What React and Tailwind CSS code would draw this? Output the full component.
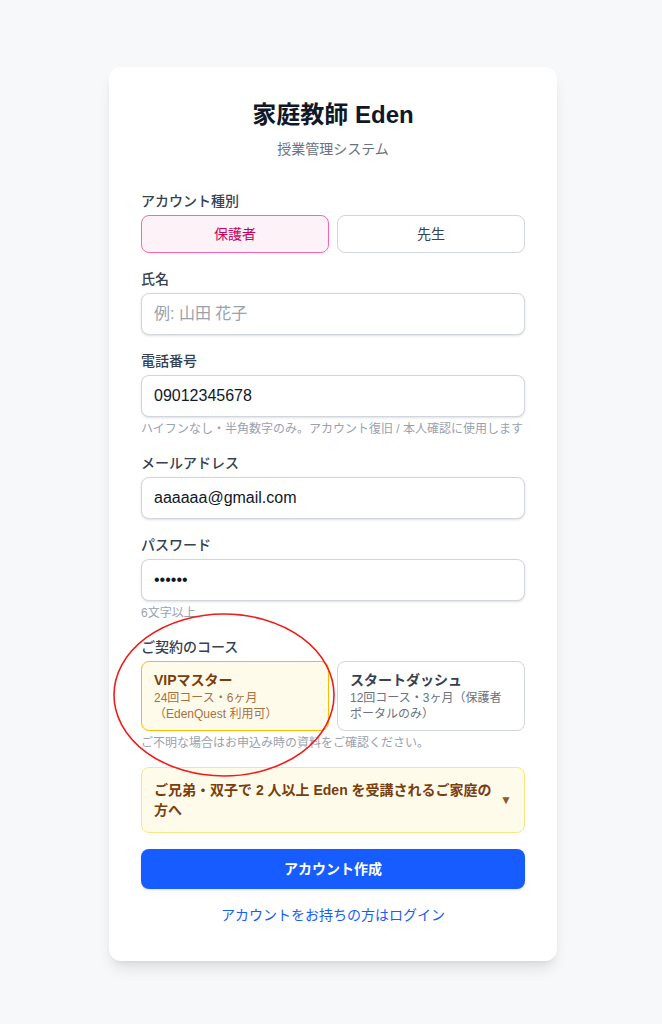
import React from 'react';

const font = { fontFamily: '"Liberation Sans", "Noto Sans CJK JP", sans-serif' };

const Field = ({ label, children, hint }) => (
	<div>
		<label className="mb-1 block text-sm font-medium text-gray-700">{label}</label>
		{children}
		{hint && <p className="mt-1 text-xs text-gray-400">{hint}</p>}
	</div>
);

const inputClass =
	'block h-[42px] w-full rounded-lg border border-gray-300 bg-white px-3 text-base text-gray-900 shadow-sm outline-none placeholder:text-gray-400';

export default function App() {
	return (
		<div className="relative min-h-screen bg-[#f7f8fa] pt-[67px] pl-1" style={font}>
			<div className="mx-auto w-[448px] rounded-xl bg-white px-8 pt-8 pb-9 shadow-lg">
				<h1 className="text-center text-2xl font-bold text-gray-900">家庭教師 Eden</h1>
				<p className="mt-2 text-center text-sm text-gray-500">授業管理システム</p>

				<div className="mt-8 space-y-4">
					<Field label="アカウント種別">
						<div className="grid grid-cols-2 gap-2">
							<button className="h-[38px] rounded-lg border border-pink-400 bg-pink-50 text-sm text-pink-700">
								保護者
							</button>
							<button className="h-[38px] rounded-lg border border-gray-300 bg-white text-sm text-gray-700">
								先生
							</button>
						</div>
					</Field>

					<Field label="氏名">
						<input className={inputClass} placeholder="例: 山田 花子" />
					</Field>

					<Field label="電話番号" hint="ハイフンなし・半角数字のみ。アカウント復旧 / 本人確認に使用します">
						<input className={inputClass} defaultValue="09012345678" />
					</Field>

					<Field label="メールアドレス">
						<input className={inputClass} defaultValue="aaaaaa@gmail.com" />
					</Field>

					<Field label="パスワード" hint="6文字以上">
						<input className={inputClass} type="password" defaultValue="aaaaaa" />
					</Field>

					<Field label="ご契約のコース" hint="ご不明な場合はお申込み時の資料をご確認ください。">
						<div className="grid grid-cols-2 gap-2">
							<div className="rounded-lg border border-amber-400 bg-amber-50 px-3 py-2">
								<p className="text-sm font-bold text-[#7a3e0e]">VIPマスター</p>
								<p className="text-xs text-[#a8703f]">24回コース・6ヶ月（EdenQuest 利用可）</p>
							</div>
							<div className="rounded-lg border border-gray-300 bg-white px-3 py-2">
								<p className="text-sm font-bold text-gray-700">スタートダッシュ</p>
								<p className="text-xs text-gray-500">12回コース・3ヶ月（保護者ポータルのみ）</p>
							</div>
						</div>
					</Field>

					<div className="flex items-center gap-1 rounded-lg border border-amber-200 bg-amber-50 p-3">
						<p className="min-w-0 flex-1 text-sm font-bold text-[#7a3e0e]">
							ご兄弟・双子で 2 人以上 Eden を受講されるご家庭の方へ
						</p>
						<span className="shrink-0 text-xs text-[#8a5a2b]">▼</span>
					</div>

					<button className="h-10 w-full rounded-lg bg-[#175cff] text-sm font-bold text-white shadow-sm">
						アカウント作成
					</button>
				</div>

				<p className="mt-4 text-center text-sm text-blue-600">アカウントをお持ちの方はログイン</p>
			</div>

			{/* annotation ring around the course picker */}
			<svg className="pointer-events-none absolute top-0 left-0" width="662" height="1024">
				<ellipse cx="224" cy="695" rx="110" ry="81" fill="none" stroke="#ee1c1c" strokeWidth="1.6" />
			</svg>
		</div>
	);
}
